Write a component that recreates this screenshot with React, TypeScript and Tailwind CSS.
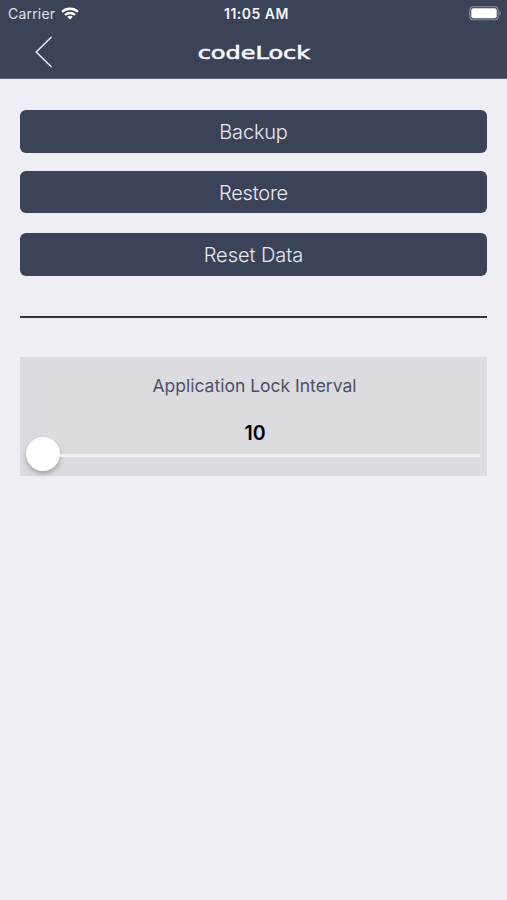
import { useState } from "react";
import { clsx } from "clsx";

const actions = [
  { label: "Backup", textClass: "tracking-[-0.2px]", rowClass: "mt-[31px] h-[42.5px]" },
  { label: "Restore", textClass: "tracking-[-0.2px]", rowClass: "mt-[18px] h-[42.5px]" },
  { label: "Reset Data", textClass: "tracking-[-0.05px]", rowClass: "mt-[20px] h-[42.5px]" },
];

function WifiIcon() {
  return (
    <svg width="18" height="13" viewBox="0 0 18 13" fill="none" stroke="#fff" strokeWidth="2.3">
      <path d="M1 4.9C5.4.7 12.6.7 17 4.9" />
      <path d="M4 8C6.8 5.3 11.2 5.3 14 8" />
      <path d="M9 12.6L6.2 9.8C7.8 8.4 10.2 8.4 11.8 9.8Z" fill="#fff" stroke="none" />
    </svg>
  );
}

function BatteryIcon() {
  return (
    <svg width="33" height="15" viewBox="0 0 33 15" fill="none">
      <rect x="0.75" y="0.75" width="28.5" height="13" rx="3.5" stroke="#8a8f9f" strokeWidth="1.2" />
      <rect x="2.3" y="2.3" width="25.4" height="9.9" rx="2" fill="#fff" />
      <path d="M30.7 5v4.5c1.5-.5 1.5-4 0-4.5Z" fill="#8a8f9f" />
    </svg>
  );
}

function StatusBar() {
  return (
    <div className="grid h-[27px] grid-cols-3 items-center pl-[8px] pr-[5px] text-[14px] leading-none">
      <div className="flex items-center gap-[6px]">
        <span className="tracking-[0.2px] text-[#dfe2e9]">Carrier</span>
        <WifiIcon />
      </div>
      <span className="pt-px pl-[3px] text-center text-[14px] font-semibold tracking-[0.5px]">11:05 AM</span>
      <div className="flex justify-end">
        <BatteryIcon />
      </div>
    </div>
  );
}

function Header() {
  return (
    <header className="h-[79px] border-b border-[#62697c] bg-[#3b4358] text-[#f4f5f9]">
      <StatusBar />
      <div className="grid h-[50px] grid-cols-[64px_1fr_64px] items-center">
        <button className="pl-[35px]" aria-label="Back">
          <svg width="18" height="32" viewBox="0 0 18 32" fill="none" stroke="#e9ebf0" strokeWidth="1.5">
            <path d="M16.5 1L1.2 16L16.5 31" />
          </svg>
        </button>
        <h1 className="flex justify-center pt-[3px] font-['DejaVu_Sans',sans-serif] text-[17px] leading-none [-webkit-text-stroke:0.6px_#f4f5f9]">
          <span className="scale-x-[1.41]">codeLock</span>
        </h1>
      </div>
    </header>
  );
}

function LockInterval() {
  const [seconds] = useState(10);

  return (
    <section className="mt-[39.5px] flex h-[119px] flex-col items-center bg-[#dcdbe0] pt-[18px]">
      <h2 className="pl-[2px] text-[17.5px] leading-[21px] text-[#4a5166]">Application Lock Interval</h2>
      <p className="mt-[26px] pl-[3px] text-[19.5px] font-semibold leading-[22px] text-black">{seconds}</p>
      <div className="mt-px flex w-full items-center pl-[6px] pr-[7px]">
        <div className="mt-[-8px] size-[34px] shrink-0 rounded-full bg-white shadow-[0_3px_5px_rgba(0,0,0,0.25)]" />
        <div className="mt-[-5px] h-[2.5px] flex-1 bg-[#f0eff4]" />
      </div>
    </section>
  );
}

export default function App() {
  return (
    <div className="min-h-screen bg-[#efeef4] font-['Inter',sans-serif]">
      <Header />
      <main className="px-[20px]">
        {actions.map(({ label, textClass, rowClass }) => (
          <button
            key={label}
            className={clsx(
              "flex w-full items-center justify-center rounded-[6px] bg-[#3b4358] pt-[2px] text-[20px] font-light leading-none text-[#e6e9f0]",
              rowClass,
            )}
          >
            <span className={textClass}>{label}</span>
          </button>
        ))}
        <hr className="mt-[40.5px] h-[1.5px] border-0 bg-[#34353c]" />
        <LockInterval />
      </main>
    </div>
  );
}
